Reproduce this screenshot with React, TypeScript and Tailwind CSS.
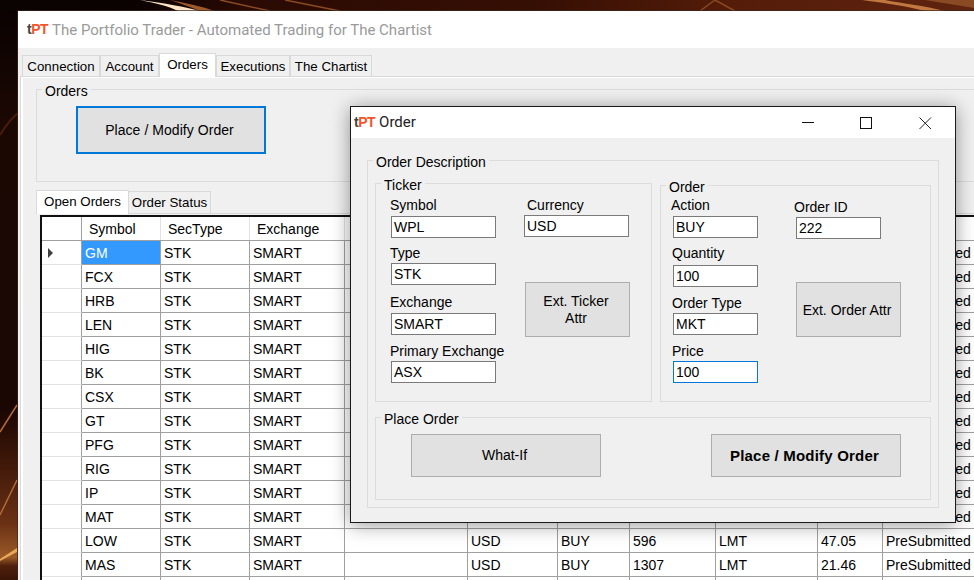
const sans = "font-['Liberation_Sans',Arial,sans-serif]";

const cols = "grid grid-cols-[40px_79px_89px_95px_123px_90px_72px_86px_102px_65px_120px]";

const symbols = ["GM", "FCX", "HRB", "LEN", "HIG", "BK", "CSX", "GT", "PFG", "RIG", "IP", "MAT"];
const headers = ["", "Symbol", "SecType", "Exchange", "", "", "", "", "", "", ""];

const orderRows = [
  ...symbols.map((s) => [s, "", "", "", "", ""]),
  ["LOW", "USD", "BUY", "596", "LMT", "47.05"],
  ["MAS", "USD", "BUY", "1307", "LMT", "21.46"],
];

const Logo = () => (
  <span className={`${sans} text-[14px] font-bold tracking-[-0.5px]`}>
    <span className="text-[#444444]">t</span>
    <span className="text-[#f0562a]">PT</span>
  </span>
);

const Group = ({ title, className, children }: { title: string; className: string; children?: React.ReactNode }) => (
  <div className={`relative border border-[#dcdcdc] ${className}`}>
    <span className="absolute -top-[7px] left-[5px] bg-[#f0f0f0] px-[3px] text-[14px] leading-[16px] text-black">{title}</span>
    {children}
  </div>
);

const Field = ({ label, value, labelClass = "", boxClass = "", focus = false }: { label: string; value: string; labelClass?: string; boxClass?: string; focus?: boolean }) => (
  <div>
    <div className={`h-[19px] text-[14px] leading-[18px] text-black ${labelClass}`}>{label}</div>
    <div className={`h-[22px] border bg-white pl-[2px] text-[14px] leading-[20px] text-black ${focus ? "border-[#0078d7]" : "border-[#7a7a7a]"} ${boxClass}`}>
      {value}
    </div>
  </div>
);

const GrayButton = ({ className, children }: { className: string; children: React.ReactNode }) => (
  <div className={`flex items-center justify-center border border-[#adadad] bg-[#e1e1e1] pr-[3px] text-center text-[14px] leading-[17px] text-black ${className}`}>
    {children}
  </div>
);

const OrderDialog = () => (
  <div className="absolute left-[350px] top-[106px] h-[417px] w-[606px] border border-[#1a1a1a] bg-[#f0f0f0] shadow-[0_2px_18px_rgba(0,0,0,0.4)]">
    <div className="flex h-[31px] items-center justify-between bg-white pl-[3px] pr-[6px]">
      <div className="flex items-center gap-[4px]">
        <Logo />
        <span className="font-['Roboto',sans-serif] text-[15px] text-[#222222]">Order</span>
      </div>
      <div className="flex items-center">
        <svg width="58" height="14" viewBox="0 0 58 14">
          <path d="M0 6.5H12" stroke="#111" fill="none" />
        </svg>
        <svg width="59" height="14" viewBox="0 0 59 14">
          <rect x="0.5" y="1.5" width="11" height="11" stroke="#111" fill="none" />
        </svg>
        <svg width="30" height="14" viewBox="0 0 30 14">
          <path d="M0.5 1.5L12 13M12 1.5L0.5 13" stroke="#222" fill="none" />
        </svg>
      </div>
    </div>

    <Group title="Order Description" className="ml-[16px] mt-[22px] h-[348px] w-[572px] pl-[7px] pt-[22px]">
      <div className="flex items-start gap-[8px]">
        <Group title="Ticker" className="h-[219px] w-[277px]">
          <div className="flex pl-[15px] pt-[13px]">
            <div className="w-[105px]">
              <Field label="Symbol" value="WPL" labelClass="-ml-[1px] -mt-[1px] mb-[1px]" />
              <div className="mt-[6px]"><Field label="Type" value="STK" labelClass="-ml-[1px]" /></div>
              <div className="mt-[9px]"><Field label="Exchange" value="SMART" labelClass="-ml-[1px] -mt-[1px] mb-[1px]" /></div>
              <div className="mt-[7px]"><Field label="Primary Exchange" value="ASX" labelClass="-ml-[1px] whitespace-nowrap" /></div>
            </div>
            <div className="-mt-[1px] ml-[28px] w-[106px]">
              <Field label="Currency" value="USD" labelClass="pl-[3px]" boxClass="w-[105px]" />
              <GrayButton className="ml-[1px] mt-[45px] h-[55px] w-[105px]">Ext. Ticker<br />Attr</GrayButton>
            </div>
          </div>
        </Group>
        <Group title="Order" className="mt-[2px] h-[217px] w-[271px]">
          <div className="flex pl-[12px] pt-[11px]">
            <div className="w-[85px]">
              <Field label="Action" value="BUY" labelClass="-ml-[2px] -mt-[1px] mb-[1px]" />
              <div className="mt-[8px]"><Field label="Quantity" value="100" labelClass="-ml-[1px] -mt-[2px] mb-[2px]" /></div>
              <div className="mt-[7px]"><Field label="Order Type" value="MKT" labelClass="-ml-[1px] whitespace-nowrap" /></div>
              <div className="mt-[7px]"><Field label="Price" value="100" labelClass="-ml-[1px]" focus /></div>
            </div>
            <div className="ml-[38px] mt-[1px] w-[105px]">
              <Field label="Order ID" value="222" labelClass="-ml-[2px]" boxClass="w-[85px]" />
              <GrayButton className="mt-[43px] h-[55px] w-[105px] pt-[2px]">Ext. Order Attr</GrayButton>
            </div>
          </div>
        </Group>
      </div>
      <Group title="Place Order" className="mt-[15px] h-[83px] w-[556px]">
        <div className="flex gap-[110px] pl-[35px] pt-[16px]">
          <GrayButton className="h-[43px] w-[190px]">What-If</GrayButton>
          <GrayButton className="h-[43px] w-[190px] text-[15px] font-bold tracking-[0.2px]">Place / Modify Order</GrayButton>
        </div>
      </Group>
    </Group>
  </div>
);

const OrdersGrid = () => (
  <div className="ml-[4px] w-[970px] border-l-2 border-t-2 border-[#111111] bg-white text-[14px] text-black">
    <div className={`${cols} h-[24px] border-b border-[#a0a0a0]`}>
      {headers.map((h, i) => (
        <div key={i} className={`flex items-center border-r pl-[7px] pt-[2px] ${i === 0 ? "border-[#a0a0a0]" : "border-[#e2e2e2]"}`}>{h}</div>
      ))}
    </div>
    {[...orderRows, ["", "", "", "", "", ""]].map((r, i) => {
      const isData = r[0] !== "";
      return (
        <div key={i} className={`${cols} h-[24px]`}>
          <div className="flex items-center border-b border-r border-b-[#e2e2e2] border-r-[#a0a0a0] pl-[6px]">
            {i === 0 && (
              <svg width="6" height="10" viewBox="0 0 6 10">
                <path d="M0 0L5 5L0 10Z" fill="#404040" />
              </svg>
            )}
          </div>
          <div className={`flex items-center border-b border-r border-[#a0a0a0] pl-[3px] pt-[2px] ${i === 0 ? "bg-[#3399ff] text-white" : ""}`}>{r[0]}</div>
          <div className="flex items-center border-b border-r border-[#a0a0a0] pl-[3px] pt-[2px]">{isData && "STK"}</div>
          <div className="flex items-center border-b border-r border-[#a0a0a0] pl-[3px] pt-[2px]">{isData && "SMART"}</div>
          <div className="border-b border-r border-[#a0a0a0]" />
          {r.slice(1).map((c, j) => (
            <div key={j} className="flex items-center border-b border-r border-[#a0a0a0] pl-[3px] pt-[2px]">{c}</div>
          ))}
          <div className="flex items-center border-b border-r border-[#a0a0a0] pl-[3px] pt-[2px]">{isData && "PreSubmitted"}</div>
        </div>
      );
    })}
  </div>
);

const mainTabs = ["Connection", "Account", "Orders", "Executions", "The Chartist"];
const tabWidths = ["w-[78px]", "w-[59px]", "w-[57px]", "w-[74px]", "w-[82px]"];

const Wallpaper = () => (
  <svg className="absolute inset-0" width="974" height="580" viewBox="0 0 974 580">
    <defs>
      <linearGradient id="top" x1="0" x2="1" y1="0" y2="0">
        <stop offset="0" stopColor="#0b0301" />
        <stop offset="0.14" stopColor="#0a0201" />
        <stop offset="0.25" stopColor="#2a0a03" />
        <stop offset="0.55" stopColor="#360f04" />
        <stop offset="0.75" stopColor="#541c09" />
        <stop offset="1" stopColor="#5f2410" />
      </linearGradient>
      <linearGradient id="left" x1="0" x2="0" y1="0" y2="1">
        <stop offset="0" stopColor="#0a0201" />
        <stop offset="0.2" stopColor="#1c0803" />
        <stop offset="0.7" stopColor="#1a0603" />
        <stop offset="0.78" stopColor="#3a1508" />
        <stop offset="0.9" stopColor="#6a3014" />
        <stop offset="0.96" stopColor="#9a5a28" />
        <stop offset="0.975" stopColor="#50200c" />
        <stop offset="1" stopColor="#3a1406" />
      </linearGradient>
    </defs>
    <rect width="974" height="11" fill="url(#top)" />
    <rect y="11" width="18" height="569" fill="url(#left)" />
    <path d="M140 0C165 3 185 7 200 11L178 11C168 6 155 3 140 0Z" fill="#fbe3c4" />
    <path d="M170 0C185 3 200 6 215 11L200 11C190 7 180 3 170 0Z" fill="#a05a28" />
    <path d="M220 0L270 11M285 0L340 11M700 11L715 0M715 0L735 11" stroke="#8a4a20" strokeWidth="1.5" fill="none" />
    <path d="M862 0C885 3 905 6 925 11L945 11C925 6 900 3 885 0Z" fill="#c07840" />
    <path d="M925 0L974 8L974 0Z" fill="#8a4a24" />
    <path d="M0 135C6 125 12 118 18 113" stroke="#4a1c0a" strokeWidth="2" fill="none" />
    <path d="M0 432L17 405M0 515L17 480" stroke="#b06a38" strokeWidth="1.5" fill="none" />
    <path d="M0 559L17 548L17 552L0 561Z" fill="#eaa858" />
  </svg>
);

export default function App() {
  return (
    <div className={`${sans} relative h-[580px] w-[974px] overflow-hidden`}>
      <Wallpaper />
      <div className="relative ml-[18px] mt-[11px] h-[569px] w-[1000px] bg-[#f0f0f0] shadow-[0_0_0_1px_rgba(60,40,30,0.7)]">
        <div className="flex h-[37px] items-center gap-[4px] bg-white pl-[9px]">
          <Logo />
          <span className="pt-[2px] font-['Roboto',sans-serif] text-[15px] text-[#9a9a9a]">The Portfolio Trader - Automated Trading for The Chartist</span>
        </div>

        <div className="flex h-[28px] items-end pl-[4px]">
          {mainTabs.map((t, i) => (
            <div
              key={t}
              className={`flex items-center justify-center border border-b-0 border-[#d9d9d9] text-[13.3px] text-black ${tabWidths[i]} ${
                t === "Orders" ? "relative z-10 -mb-px h-[24px] bg-white pb-[2px]" : "h-[21px] bg-[#f0f0f0] pt-[1px]"
              }`}
            >
              {t}
            </div>
          ))}
        </div>

        <div className="ml-[2px] h-[511px] border border-[#d9d9d9] bg-[#f0f0f0]">
          <div className="h-full border-l-2 border-t border-white pl-[13px] pt-[11px]">
            <Group title="Orders" className="h-[93px] w-[960px] pl-[39px] pt-[16px]">
              <div className="flex h-[48px] w-[190px] items-center justify-center border-2 border-[#0078d7] bg-[#e1e1e1] pr-[3px] text-[14px] tracking-[0.05px] text-black">
                Place / Modify Order
              </div>
            </Group>

            <div className="mt-[8px] flex items-end">
              <div className="relative z-10 -mb-px flex h-[24px] w-[93px] items-center justify-center border border-b-0 border-[#d9d9d9] bg-white pb-[2px] text-[13.3px] text-black">
                Open Orders
              </div>
              <div className="flex h-[22px] w-[82px] items-center justify-center border border-b-0 border-l-0 border-[#d9d9d9] pt-[1px] text-[13.3px] text-black">
                Order Status
              </div>
            </div>
            <div className="border-t border-[#d9d9d9] pt-px">
              <OrdersGrid />
            </div>
          </div>
        </div>
      </div>
      <OrderDialog />
    </div>
  );
}
